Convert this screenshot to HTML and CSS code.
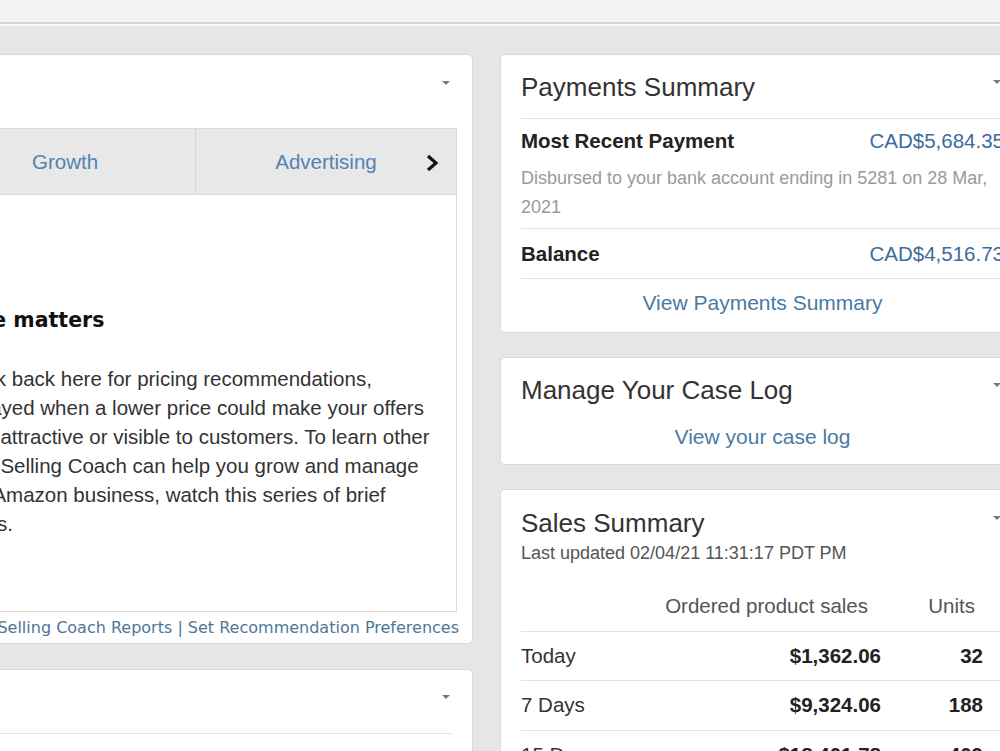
FILE: index.html
```html
<!DOCTYPE html>
<html lang="en">
<head>
    <meta charset="UTF-8">
    <meta name="viewport" content="width=device-width, initial-scale=1.0">
    <title>Seller Central - Home</title>
    <link rel="stylesheet" href="styles.css">
</head>
<body>
    <div class="topbar"></div>

    <div class="dashboard">
        <!-- left column -->
        <div class="col-left">
            <section class="card coach">
                <div class="coach-head">
                    <h2 class="coach-title">Selling Coach</h2>
                    <span class="caret"></span>
                </div>
                <div class="tabs">
                    <a class="tab" href="#">Pricing</a>
                    <a class="tab" href="#">Growth</a>
                    <a class="tab" href="#">Advertising</a>
                    <span class="tab-next">
                        <svg width="14" height="18" viewBox="0 0 14 18"><polyline points="3,2 11,9 3,16" fill="none" stroke="#111" stroke-width="3.2" stroke-linejoin="miter"/></svg>
                    </span>
                </div>
                <div class="coach-body">
                    <h3>Price matters</h3>
                    <p>Check back here for pricing recommendations, displayed when a lower price could make your offers more attractive or visible to customers. To learn other ways Selling Coach can help you grow and manage your Amazon business, watch this series of brief videos.</p>
                </div>
                <div class="coach-links">
                    <a href="#">Selling Coach Home</a> | <a href="#">View Selling Coach Reports</a> | <a href="#">Set Recommendation Preferences</a>
                </div>
            </section>

            <section class="card coach-next">
                <div class="coach-next-head">
                    <span class="caret"></span>
                </div>
            </section>
        </div>

        <!-- right column -->
        <div class="col-right">
            <section class="card">
                <div class="card-head with-line">
                    <h2>Payments Summary</h2>
                    <span class="caret"></span>
                </div>
                <div class="pay-row pay-recent">
                    <div class="pay-line">
                        <span class="pay-label">Most Recent Payment</span>
                        <a class="pay-value" href="#">CAD$5,684.35</a>
                    </div>
                    <p class="pay-note">Disbursed to your bank account ending in 5281 on 28 Mar, 2021</p>
                </div>
                <div class="pay-row pay-balance">
                    <div class="pay-line">
                        <span class="pay-label">Balance</span>
                        <a class="pay-value" href="#">CAD$4,516.73</a>
                    </div>
                </div>
                <div class="card-link pay-link"><a href="#">View Payments Summary</a></div>
            </section>

            <section class="card">
                <div class="card-head">
                    <h2>Manage Your Case Log</h2>
                    <span class="caret"></span>
                </div>
                <div class="card-link case-link"><a href="#">View your case log</a></div>
            </section>

            <section class="card sales">
                <div class="card-head sales-head">
                    <h2>Sales Summary</h2>
                    <span class="caret"></span>
                </div>
                <div class="updated">Last updated 02/04/21 11:31:17 PDT PM</div>
                <div class="sales-table">
                    <div class="sales-row sales-th">
                        <span></span>
                        <span class="c-sales">Ordered product sales</span>
                        <span class="c-units">Units</span>
                    </div>
                    <div class="sales-row">
                        <span>Today</span>
                        <span class="c-sales">$1,362.06</span>
                        <span class="c-units">32</span>
                    </div>
                    <div class="sales-row">
                        <span>7 Days</span>
                        <span class="c-sales">$9,324.06</span>
                        <span class="c-units">188</span>
                    </div>
                    <div class="sales-row">
                        <span>15 Days</span>
                        <span class="c-sales">$18,401.78</span>
                        <span class="c-units">409</span>
                    </div>
                    <div class="sales-row">
                        <span>30 Days</span>
                        <span class="c-sales">$36,950.12</span>
                        <span class="c-units">812</span>
                    </div>
                </div>
            </section>
        </div>
    </div>
</body>
</html>
```

FILE: styles.css
```css
* {
    box-sizing: border-box;
}
body {
    margin: 0;
    width: 1000px;
    height: 751px;
    overflow: hidden;
    background: #e6e6e6;
    font-family: "Liberation Sans", Arial, sans-serif;
    color: #333;
}
a {
    text-decoration: none;
}
h2, h3, p {
    margin: 0;
}
.topbar {
    height: 24px;
    background: #f2f2f2;
    border-bottom: 2px solid #d3d3d3;
    box-shadow: 0 2px 0 #f7f7f7;
}
.dashboard {
    display: flex;
    gap: 27px;
    padding-top: 30px;
    margin-left: -343px;
}
.col-left {
    width: 816px;
    flex-shrink: 0;
}
.col-right {
    width: 525px;
    flex-shrink: 0;
    display: flex;
    flex-direction: column;
    gap: 24px;
}
.card {
    background: #fff;
    border: 1px solid #dadada;
    border-radius: 5px;
}
.caret {
    width: 0;
    height: 0;
    border-left: 4px solid transparent;
    border-right: 4px solid transparent;
    border-top: 4px solid #7a7a7a;
    margin-bottom: 10px;
}

/* Selling coach (left) */
.coach {
    padding: 0 15px;
}
.coach-head {
    height: 73px;
    display: flex;
    justify-content: space-between;
    align-items: center;
    padding-right: 7px;
    padding-bottom: 2px;
}
.coach-title {
    font-size: 26px;
    font-weight: normal;
}
.coach-head .caret {
    margin-bottom: 16px;
}
.tabs {
    position: relative;
    display: flex;
    height: 67px;
    background: #e8e8e8;
    border: 1px solid #dbdbdb;
}
.tab {
    flex: 1;
    display: flex;
    align-items: center;
    justify-content: center;
    font-size: 20.5px;
    color: #5283b3;
    border-left: 1px solid #d6d6d6;
}
.tab:first-child {
    border-left: none;
}
.tab-next {
    position: absolute;
    right: 17px;
    top: 25px;
    display: flex;
}
.coach-body {
    height: 417px;
    border: 1px solid #dcdcdc;
    border-top: none;
    padding: 111px 16px 0 274px;
}
.coach-body h3 {
    font-family: "DejaVu Sans", Verdana, sans-serif;
    font-size: 20.5px;
    font-weight: bold;
    line-height: 28px;
    color: #111;
}
.coach-body p {
    margin-top: 30px;
    font-size: 20.5px;
    line-height: 29px;
    color: #333;
}
.coach-links {
    padding: 6px 0 5px;
    margin-right: -2px;
    line-height: 20px;
    text-align: right;
    font-family: "DejaVu Sans", Verdana, sans-serif;
    font-size: 16px;
    color: #4d7797;
}
.coach-links a {
    color: #4d7797;
}
.coach-next {
    margin-top: 25px;
    height: 200px;
    padding: 0 15px;
}
.coach-next-head {
    height: 64px;
    margin-right: 5px;
    border-bottom: 1px solid #e4e4e4;
    display: flex;
    justify-content: flex-end;
    align-items: center;
    padding-right: 2px;
}

/* Right column cards */
.col-right .card {
    padding: 0 20px;
}
.card-head {
    height: 64px;
    display: flex;
    justify-content: space-between;
    align-items: center;
    padding-right: 3px;
}
.card-head h2 {
    font-size: 26px;
    font-weight: normal;
    line-height: 32px;
    color: #333;
}
.with-line {
    border-bottom: 1px solid #e3e3e3;
    margin-right: -20px;
    padding-right: 23px;
}
.pay-row {
    border-bottom: 1px solid #e3e3e3;
    margin-right: -20px;
}
.pay-line {
    display: flex;
    justify-content: space-between;
    align-items: center;
    font-size: 20.5px;
    line-height: 28px;
    margin-right: 20px;
}
.pay-label {
    font-weight: bold;
    color: #222;
}
.pay-value {
    color: #3c6d9a;
}
.pay-recent {
    padding: 8px 0 6px;
}
.pay-note {
    margin-top: 9px;
    font-size: 18px;
    line-height: 29px;
    color: #9a9a9a;
}
.pay-balance {
    height: 50px;
    display: flex;
    flex-direction: column;
    justify-content: center;
}
.card-link {
    text-align: center;
    font-size: 21px;
    line-height: 29px;
}
.card-link a {
    color: #4a7aa3;
}
.pay-link {
    padding: 9px 0 15px;
}
.case-link {
    padding-bottom: 13px;
}
.sales {
    height: 300px;
}
.sales-head {
    height: auto;
    padding-top: 17px;
}
.updated {
    font-size: 18px;
    line-height: 29px;
    color: #555;
}
.sales-table {
    margin-top: 14px;
}
.sales-row {
    display: grid;
    grid-template-columns: 1fr 220px 123px;
    align-items: center;
    height: 49.5px;
    border-bottom: 1px solid #e3e3e3;
    font-size: 20.5px;
    color: #333;
}
.sales-row .c-sales,
.sales-row .c-units {
    text-align: right;
    font-weight: bold;
    color: #222;
}
.sales-row .c-units {
    padding-right: 21px;
}
.sales-th .c-sales,
.sales-th .c-units {
    font-weight: normal;
    color: #555;
}
.sales-th .c-sales {
    padding-right: 13px;
}
.sales-th .c-units {
    padding-right: 29px;
}
```
